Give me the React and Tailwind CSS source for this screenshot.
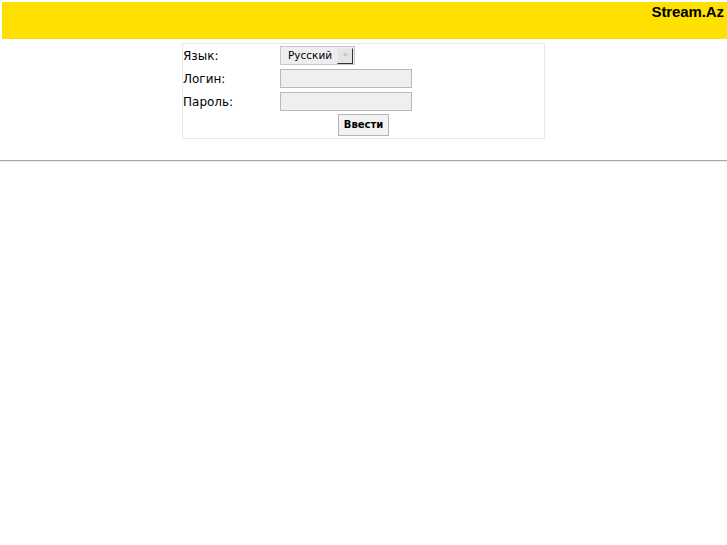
import React from "react";

export default function App() {
  return (
    <div className="min-h-[545px] bg-white pt-[2px] font-['DejaVu_Sans',sans-serif] text-black">
      <div className="ml-[2px] flex h-[37px] justify-end bg-[#fee100] pr-[3px] pt-[1px]">
        <span className="font-['Liberation_Sans',Arial,sans-serif] text-[15px] font-bold leading-[18px] tracking-[-0.1px]">
          Stream.Az
        </span>
      </div>

      <div className="mx-auto mt-[4px] flex h-[96px] w-[363px] flex-col border border-[#e8e8e8]">
        <div className="flex h-[23px] items-center">
          <span className="w-[97px] text-[12px] leading-[14px]">Язык:</span>
          <div className="flex h-[19px] w-[75px] items-center justify-between border border-[#c8c8c8] bg-[#eeeeee] pl-[7px] pr-[1px]">
            <span className="text-[10.5px] leading-[13px]">Русский</span>
            <div className="flex h-[16px] w-[16px] items-center justify-center border border-[#e8e8e8] border-b-[#333] border-r-[#333] bg-[#e4e4e4]">
              <svg width="7" height="5" viewBox="0 0 7 5">
                <path d="M0.5 0.5 L6.5 0.5 L3.5 4 Z" fill="#c4c4c4" />
              </svg>
            </div>
          </div>
        </div>
        <div className="flex h-[23px] items-center">
          <span className="w-[97px] text-[12px] leading-[14px]">Логин:</span>
          <div className="h-[19px] w-[132px] border border-[#b9b9b9] bg-[#efefef]" />
        </div>
        <div className="flex h-[23px] items-center">
          <span className="w-[97px] text-[12px] leading-[14px]">Пароль:</span>
          <div className="h-[19px] w-[132px] border border-[#b9b9b9] bg-[#efefef]" />
        </div>
        <div className="flex justify-center pt-[1px]">
          <div className="flex h-[22px] w-[51px] items-center justify-center border border-[#b5b5b5] bg-[#f2f2f2]">
            <span className="font-['DejaVu_Sans',sans-serif] text-[10px] font-bold leading-[12px]">Ввести</span>
          </div>
        </div>
      </div>

      <div className="mt-[21px] h-[2px] w-full border-t border-[#a9a9a9] border-b border-b-[#eeeeee]" />
    </div>
  );
}
